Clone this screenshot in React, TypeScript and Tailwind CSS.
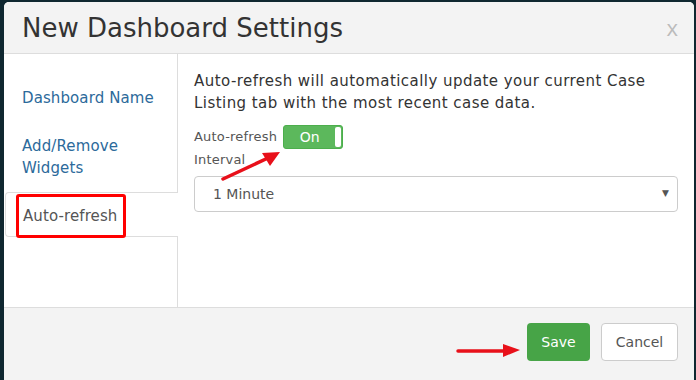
export default function App() {
  return (
    <div className="relative h-[380px] w-[696px] overflow-hidden bg-[#0f2730] pl-[4px] pt-[2px] font-['DejaVu_Sans',sans-serif]">
      <div className="flex h-[420px] w-[690px] flex-col overflow-hidden rounded-t-[5px] bg-white">
        {/* header */}
        <div className="flex h-[52px] items-center justify-between border-b border-[#dddddd] bg-[#f3f3f3] pl-[18px] pr-[16px]">
          <h1 className="mt-[1px] text-[26px] leading-[30px] text-[#333333]">New Dashboard Settings</h1>
          <span className="-mt-[1px] font-['Open_Sans',sans-serif] text-[22px] leading-none text-[#bbbbbb]">x</span>
        </div>

        {/* body */}
        <div className="flex h-[253px]">
          <div className="flex w-[174px] flex-col">
            <div className="flex flex-col gap-[4px] border-r border-[#dddddd] pb-[2px] pl-[18px] pt-[22px] text-[15px] leading-[22px] tracking-[0.1px] text-[#2c6a9b]">
              <a className="py-[11px]">Dashboard Name</a>
              <a className="py-[11px]">Add/Remove<br />Widgets</a>
            </div>
            <div className="ml-[1px] rounded-l-[4px] border-y border-l border-[#dddddd] pb-[9px] pl-[17px] pt-[12px] text-[15px] leading-[22px] tracking-[0.1px] text-[#555555]">
              Auto-refresh
            </div>
            <div className="flex-1 border-r border-[#dddddd]" />
          </div>

          <div className="flex-1 px-[16px] pt-[16px] text-[#333333]">
            <p className="pr-[20px] text-[15px] leading-[22px] tracking-[0.45px]">
              Auto-refresh will automatically update your current Case Listing tab with the most recent case data.
            </p>
            <div className="mt-[11px] flex items-center gap-[6px]">
              <span className="text-[13px] leading-[18px] tracking-[0.2px] text-[#555555]">Auto-refresh</span>
              <div className="flex h-[24px] w-[60px] items-center rounded-[3px] border border-[#4cae4c] bg-[#5cb85c] pr-[1px]">
                <span className="flex-1 text-center text-[14px] leading-none text-white">On</span>
                <span className="h-[20px] w-[6px] rounded-[2px] bg-white" />
              </div>
            </div>
            <div className="mt-[1px] text-[13px] leading-[20px] tracking-[0.2px] text-[#555555]">Interval</div>
            <div className="mt-[6px] flex h-[36px] items-center justify-between rounded-[4px] border border-[#cccccc] pl-[18px] pr-[8px] text-[14px] text-[#555555]">
              <span className="mt-[1px]">1 Minute</span>
              <span className="text-[9px] text-[#555555]">▼</span>
            </div>
          </div>
        </div>

        {/* footer */}
        <div className="flex flex-1 justify-end gap-[11px] border-t border-[#dddddd] bg-[#f3f3f3] pr-[16px] pt-[15px]">
          <button className="h-[38px] w-[63px] rounded-[4px] bg-[#47a447] text-[14px] text-white">Save</button>
          <button className="h-[38px] w-[77px] rounded-[4px] border border-[#cccccc] bg-white text-[14px] text-[#555555]">Cancel</button>
        </div>
      </div>

      {/* annotations */}
      <div className="absolute left-[16px] top-[194px] h-[44px] w-[110px] rounded-[3px] border-[3px] border-[#ff0000]" />
      <svg className="absolute left-0 top-0" width="696" height="380" viewBox="0 0 696 380">
        <line x1="223" y1="179" x2="268" y2="158" stroke="#e8101a" strokeWidth="3.5" strokeLinecap="round" />
        <polygon points="280,152 262,153 270,166" fill="#e8101a" />
        <line x1="458" y1="351" x2="506" y2="351" stroke="#e8101a" strokeWidth="3.5" strokeLinecap="round" />
        <polygon points="520,350 503,344 503,357" fill="#e8101a" />
      </svg>
    </div>
  );
}
